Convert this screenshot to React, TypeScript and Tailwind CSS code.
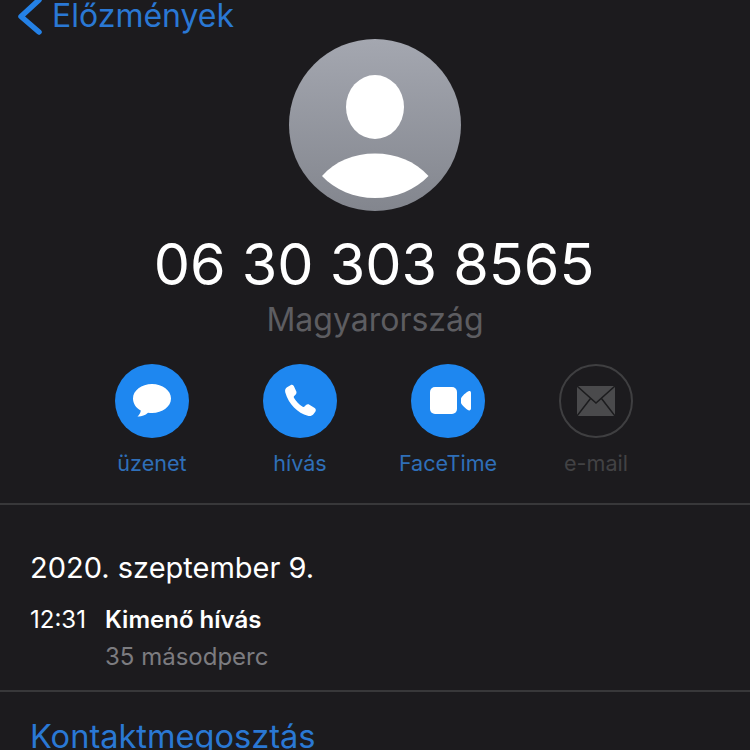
const actions = [
  { label: 'üzenet', icon: 'message' },
  { label: 'hívás', icon: 'phone' },
  { label: 'FaceTime', icon: 'video' },
  { label: 'e-mail', icon: 'mail' },
]

function ActionIcon({ icon }: { icon: string }) {
  if (icon === 'message') {
    return (
      <svg width="40" height="36" viewBox="0 0 40 36">
        <path d="M20 1C9.500 1 1 7.500 1 15.500c0 5 3 9.400 7.800 12-.3 2.200-1.500 4.300-3.300 6 3.500.3 7.500-1 10.500-3.800 1.200.2 2.800.3 4 .3 10.500 0 19-6.500 19-14.500S30.500 1 20 1z" fill="#fff" />
      </svg>
    )
  }
  if (icon === 'phone') {
    return (
      <svg width="36" height="36" viewBox="0 0 36 36">
        <path d="M8.500 2.200 5 4.300C3.300 5.400 2.700 7.300 3.300 9.400c1.700 5.700 4.800 11 8.700 15 4 3.900 8.700 7 13.800 8.400 2.200.6 4.300 0 5.600-1.600l1.900-2.500c.9-1.200.6-2.800-.6-3.600l-5.300-3.400c-1.100-.7-2.500-.5-3.400.4l-1.500 1.500c-.5.500-1.200.6-1.800.2-1.800-1.100-3.500-2.500-5-4-1.500-1.500-2.800-3.300-3.800-5-.3-.6-.2-1.300.3-1.800l1.500-1.500c.9-.9 1.100-2.300.4-3.400L11.800 3c-.8-1.200-2.200-1.500-3.300-.8z" fill="#fff" />
      </svg>
    )
  }
  if (icon === 'video') {
    return (
      <svg width="42" height="28" viewBox="0 0 42 28" className="ml-[5px]">
        <rect x="0" y="0" width="27" height="27" rx="5" fill="#fff" />
        <path d="M31 11.500C32 9 36 5.500 38.500 4.300c1.200-.6 2.500 0 2.500 1.600v15.700c0 1.500-1.300 2.200-2.500 1.600C36 22 32 18.500 31 16z" fill="#fff" />
      </svg>
    )
  }
  return (
    <svg width="38" height="30" viewBox="0 0 38 30">
      <rect x="0" y="0" width="38" height="30" fill="#4a4a4c" />
      <path d="M0 0 19 17 38 0M0 30 13.500 12.500M38 30 24.500 12.500" fill="none" stroke="#1c1c1e" strokeWidth="1.500" />
    </svg>
  )
}

export default function App() {
  return (
    <div className="h-[750px] w-[750px] overflow-hidden bg-[#1c1b1e] font-['Inter',sans-serif]">
      <nav className="flex h-[39px] items-center pl-[17px]">
        <svg width="26" height="38" viewBox="0 0 26 38" className="-mt-[6px] shrink-0">
          <path d="M22 2 4 18.500 22 34" fill="none" stroke="#2481e6" strokeWidth="5.500" strokeLinecap="round" strokeLinejoin="round" />
        </svg>
        <span className="ml-[9px] -mt-[8px] text-[32px] leading-none text-[#2a78d4]">Előzmények</span>
      </nav>

      <div className="flex flex-col items-center">
        <div className="flex h-[172px] w-[172px] items-center justify-center overflow-hidden rounded-full bg-gradient-to-b from-[#a4a7b0] to-[#83868e]">
          <svg width="172" height="172" viewBox="0 0 172 172">
            <ellipse cx="86" cy="68" rx="29" ry="32" fill="#fff" />
            <path d="M33 137C46 122 65 114.500 86 114.500S126 122 139.500 137C126 151 107 159 86 159S46 151 33 137z" fill="#fff" />
          </svg>
        </div>
        <h1 className="mt-[22px] pr-[2px] text-[57.500px] leading-[62px] font-normal whitespace-nowrap text-white">06 30 303 8565</h1>
        <p className="mt-[5px] text-[32px] leading-[40px] text-[#5d5d61]">Magyarország</p>
      </div>

      <div className="mt-[24px] flex gap-[74px] pl-[115px]">
        {actions.map(a => {
          const off = a.icon === 'mail'
          return (
            <div key={a.label} className="flex w-[74px] flex-col items-center">
              <div className={off
                ? 'flex h-[74px] w-[74px] items-center justify-center rounded-full border-2 border-[#3f3f41]'
                : 'flex h-[74px] w-[74px] items-center justify-center rounded-full bg-[#1e87f0]'}>
                <ActionIcon icon={a.icon} />
              </div>
              <span className={off
                ? 'mt-[12px] text-[21.600px] leading-[26px] whitespace-nowrap text-[#424244]'
                : 'mt-[12px] text-[21.600px] leading-[26px] whitespace-nowrap text-[#2f6fb8]'}>
                {a.label}
              </span>
            </div>
          )
        })}
      </div>

      <div className="mt-[27px] h-[2px] bg-[#38383a]" />

      <section className="px-[30px] pt-[44px]">
        <p className="text-[29px] leading-[38px] text-white">2020. szeptember 9.</p>
        <div className="mt-[18px] flex">
          <span className="w-[75px] text-[24px] leading-[30px] text-white">12:31</span>
          <div>
            <p className="text-[24px] leading-[30px] font-semibold text-white">Kimenő hívás</p>
            <p className="mt-[7px] text-[24px] leading-[30px] text-[#7c7c80]">35 másodperc</p>
          </div>
        </div>
      </section>

      <div className="mt-[18px] h-[2px] bg-[#38383a]" />

      <p className="mt-[25px] px-[30px] text-[32.600px] leading-[38px] text-[#2a78d4]">Kontaktmegosztás</p>
    </div>
  )
}
